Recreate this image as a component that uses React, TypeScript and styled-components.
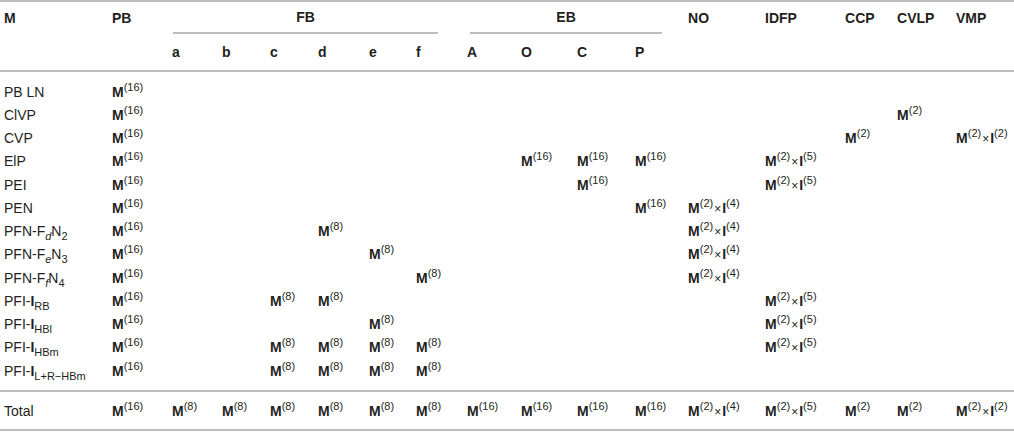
import React from 'react'
import styled, { createGlobalStyle } from 'styled-components'

const GlobalStyle = createGlobalStyle`
  body {
    margin: 0;
    background: #ffffff;
    font-family: "Liberation Sans", Arial, sans-serif;
    color: #231f20;
  }
`

const Table = styled.table`
  width: 1014px;
  table-layout: fixed;
  border-collapse: collapse;
  font-size: 14px;
`

const HeadRow = styled.tr<{ $top?: boolean }>`
  border-top: ${p => (p.$top ? '2px solid #bcbcbc' : 'none')};
  border-bottom: ${p => (p.$top ? 'none' : '2px solid #bcbcbc')};
`

const Th = styled.th<{ $h: number }>`
  height: ${p => p.$h}px;
  padding: 0 0 0 4px;
  text-align: left;
  font-weight: bold;
  vertical-align: middle;
`

const GroupCell = styled.th`
  padding: 0;
  font-weight: bold;
  vertical-align: bottom;
`

const GroupLabel = styled.div<{ $l: number; $r: number }>`
  margin: 0 ${p => p.$r}px 0 ${p => p.$l}px;
  text-align: center;
  padding-bottom: 7px;
  border-bottom: 2px solid #bcbcbc;
`

const Body = styled.tbody`
  tr:first-child td {
    padding-top: 8px;
  }
  tr:last-child td {
    padding-bottom: 8px;
  }
`

const Td = styled.td`
  height: 23.25px;
  padding: 0 0 0 4px;
  white-space: nowrap;
  vertical-align: middle;
`

const TotalRow = styled.tr`
  border-top: 2px solid #bcbcbc;
  border-bottom: 2px solid #bcbcbc;
  td {
    height: 37px;
  }
`

const Bold = styled.b`
  font-weight: bold;
`

const Sup = styled.sup`
  font-size: 11px;
  font-weight: normal;
  line-height: 0;
  vertical-align: 6px;
`

const Sub = styled.sub<{ $italic?: boolean }>`
  font-size: 11px;
  line-height: 0;
  vertical-align: -4px;
  font-style: ${p => (p.$italic ? 'italic' : 'normal')};
`

const Times = styled.span`
  font-size: 12px;
  margin: 0 1px;
`

const widths = [108, 60, 50, 48, 48, 51, 47, 51, 54, 56, 58, 53, 77, 80, 52, 59, 62]
const subHeads = ['a', 'b', 'c', 'd', 'e', 'f', 'A', 'O', 'C', 'P']

// cell codes: "16" -> M(16), "2x5" -> M(2)xI(5)
const Mark = ({ code }: { code: string }) => {
  if (!code) return null
  const [m, i] = code.split('x')
  return (
    <>
      <Bold>M</Bold>
      <Sup>({m})</Sup>
      {i && (
        <>
          <Times>×</Times>
          <Bold>I</Bold>
          <Sup>({i})</Sup>
        </>
      )}
    </>
  )
}

type Row = { label: React.ReactNode; cells: Record<number, string> }

// column index: 1 PB, 2-7 a..f, 8-11 A O C P, 12 NO, 13 IDFP, 14 CCP, 15 CVLP, 16 VMP
const rows: Row[] = [
  { label: 'PB LN', cells: { 1: '16' } },
  { label: 'ClVP', cells: { 1: '16', 15: '2' } },
  { label: 'CVP', cells: { 1: '16', 14: '2', 16: '2x2' } },
  { label: 'ElP', cells: { 1: '16', 9: '16', 10: '16', 11: '16', 13: '2x5' } },
  { label: 'PEI', cells: { 1: '16', 10: '16', 13: '2x5' } },
  { label: 'PEN', cells: { 1: '16', 11: '16', 12: '2x4' } },
  { label: <>PFN-F<Sub $italic>d</Sub>N<Sub>2</Sub></>, cells: { 1: '16', 5: '8', 12: '2x4' } },
  { label: <>PFN-F<Sub $italic>e</Sub>N<Sub>3</Sub></>, cells: { 1: '16', 6: '8', 12: '2x4' } },
  { label: <>PFN-F<Sub $italic>f</Sub>N<Sub>4</Sub></>, cells: { 1: '16', 7: '8', 12: '2x4' } },
  { label: <>PFI-<Bold>I</Bold><Sub>RB</Sub></>, cells: { 1: '16', 4: '8', 5: '8', 13: '2x5' } },
  { label: <>PFI-<Bold>I</Bold><Sub>HBl</Sub></>, cells: { 1: '16', 6: '8', 13: '2x5' } },
  { label: <>PFI-<Bold>I</Bold><Sub>HBm</Sub></>, cells: { 1: '16', 4: '8', 5: '8', 6: '8', 7: '8', 13: '2x5' } },
  { label: <>PFI-<Bold>I</Bold><Sub>L+R−HBm</Sub></>, cells: { 1: '16', 4: '8', 5: '8', 6: '8', 7: '8' } },
]

const total = ['16', '8', '8', '8', '8', '8', '8', '16', '16', '16', '16', '2x4', '2x5', '2', '2', '2x2']

const App = () => {
  return (
    <>
      <GlobalStyle />
      <Table>
        <colgroup>
          {widths.map((w, i) => (
            <col key={i} style={{ width: w }} />
          ))}
        </colgroup>
        <thead>
          <HeadRow $top>
            <Th $h={32}>M</Th>
            <Th $h={32}>PB</Th>
            <GroupCell colSpan={6}>
              <GroupLabel $l={5} $r={25}>FB</GroupLabel>
            </GroupCell>
            <GroupCell colSpan={4}>
              <GroupLabel $l={7} $r={22}>EB</GroupLabel>
            </GroupCell>
            <Th $h={32}>NO</Th>
            <Th $h={32}>IDFP</Th>
            <Th $h={32}>CCP</Th>
            <Th $h={32}>CVLP</Th>
            <Th $h={32}>VMP</Th>
          </HeadRow>
          <HeadRow>
            <Th $h={36} />
            <Th $h={36} />
            {subHeads.map(s => (
              <Th key={s} $h={36}>{s}</Th>
            ))}
            <Th $h={36} />
            <Th $h={36} />
            <Th $h={36} />
            <Th $h={36} />
            <Th $h={36} />
          </HeadRow>
        </thead>
        <Body>
          {rows.map((r, ri) => (
            <tr key={ri}>
              <Td>{r.label}</Td>
              {Array.from({ length: 16 }, (_, c) => (
                <Td key={c}>
                  <Mark code={r.cells[c + 1] || ''} />
                </Td>
              ))}
            </tr>
          ))}
        </Body>
        <tfoot>
          <TotalRow>
            <Td>Total</Td>
            {total.map((t, i) => (
              <Td key={i}>
                <Mark code={t} />
              </Td>
            ))}
          </TotalRow>
        </tfoot>
      </Table>
    </>
  )
}

export default App
